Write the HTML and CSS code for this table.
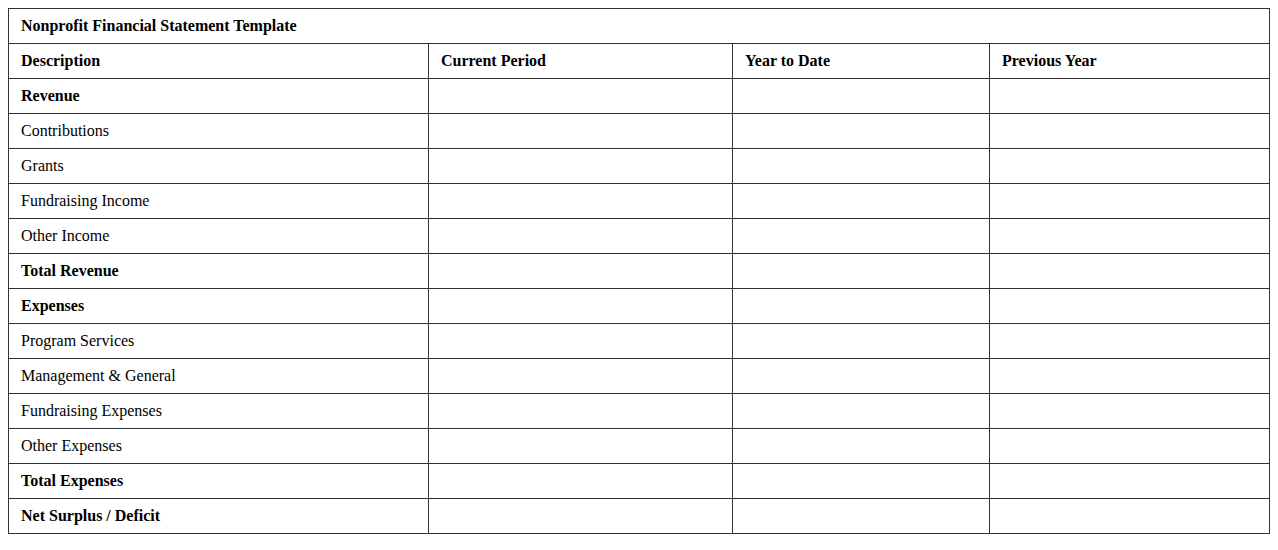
FILE: index.html
```html
<!DOCTYPE html>
<html>
<head>
<meta charset="utf-8">
<link rel="stylesheet" href="styles.css">
</head>
<body>
<table class="sheet">
  <colgroup>
    <col class="c1"><col class="c2"><col class="c3"><col class="c4">
  </colgroup>
  <tr><td colspan="4" class="b">Nonprofit Financial Statement Template</td></tr>
  <tr><td class="b">Description</td><td class="b">Current Period</td><td class="b">Year to Date</td><td class="b">Previous Year</td></tr>
  <tr><td class="b">Revenue</td><td></td><td></td><td></td></tr>
  <tr><td>Contributions</td><td></td><td></td><td></td></tr>
  <tr><td>Grants</td><td></td><td></td><td></td></tr>
  <tr><td>Fundraising Income</td><td></td><td></td><td></td></tr>
  <tr><td>Other Income</td><td></td><td></td><td></td></tr>
  <tr><td class="b">Total Revenue</td><td></td><td></td><td></td></tr>
  <tr><td class="b">Expenses</td><td></td><td></td><td></td></tr>
  <tr><td>Program Services</td><td></td><td></td><td></td></tr>
  <tr><td>Management &amp; General</td><td></td><td></td><td></td></tr>
  <tr><td>Fundraising Expenses</td><td></td><td></td><td></td></tr>
  <tr><td>Other Expenses</td><td></td><td></td><td></td></tr>
  <tr><td class="b">Total Expenses</td><td></td><td></td><td></td></tr>
  <tr><td class="b">Net Surplus / Deficit</td><td></td><td></td><td></td></tr>
</table>
</body>
</html>
```
FILE: styles.css
```css
body {
  margin: 8px;
  font-family: "Liberation Serif", "Times New Roman", serif;
  font-size: 16px;
  color: #000;
  background: #fff;
}
.sheet {
  width: 1262px;
  border-collapse: collapse;
  table-layout: fixed;
}
.c1 { width: 420px; }
.c2 { width: 304px; }
.c3 { width: 257px; }
.c4 { width: auto; }
.sheet td {
  border: 1px solid #333;
  padding: 8px 12px;
  line-height: 18px;
  height: 18px;
  text-align: left;
  vertical-align: middle;
}
.sheet td.b { font-weight: bold; }
```
